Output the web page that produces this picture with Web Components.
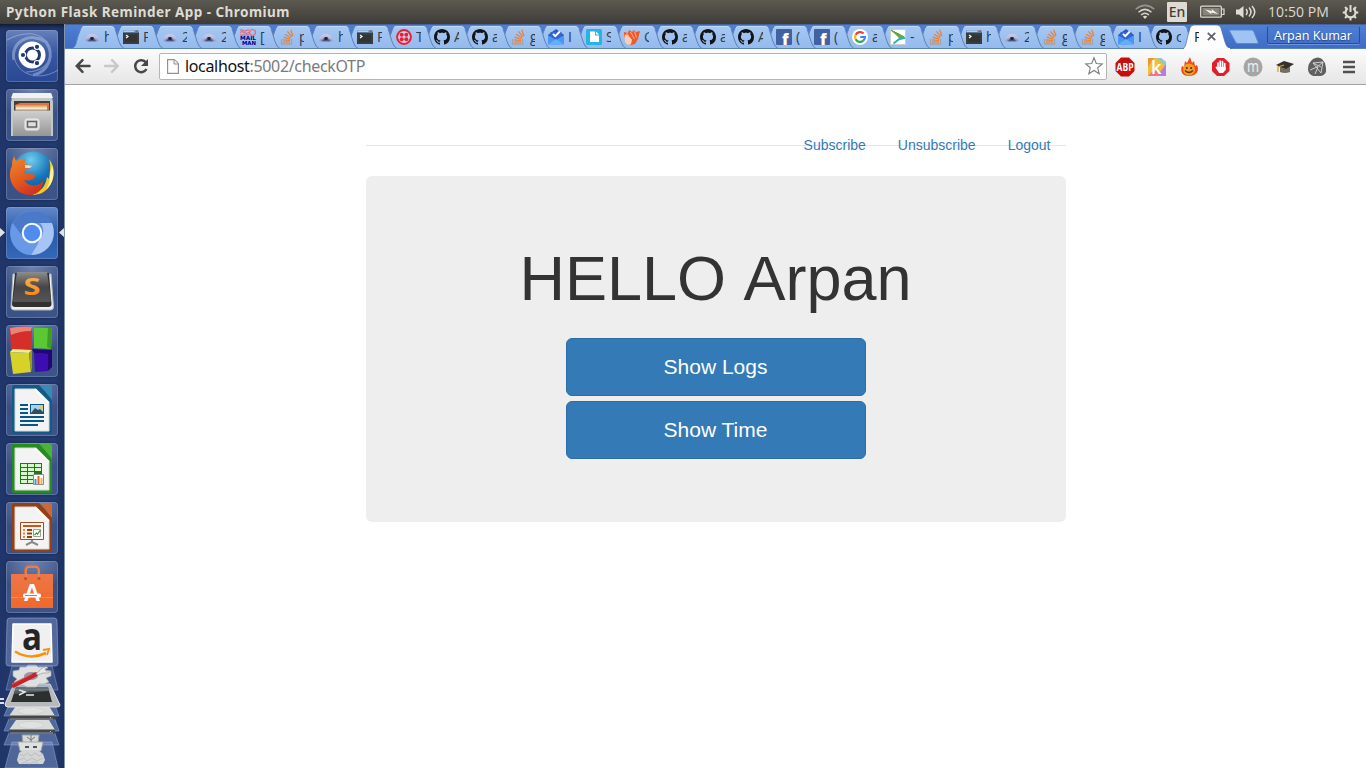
<!DOCTYPE html>
<html lang="en">
<head>
<meta charset="utf-8">
<title>Python Flask Reminder App</title>
<style>
html,body{margin:0;height:100%;overflow:hidden;background:#fff;font-family:"Noto Sans","Open Sans",sans-serif}
</style>
</head>
<body>
<desktop-shell></desktop-shell>
<script>
const T = {
bell:`<defs><radialGradient id="g" cx=".5" cy="1" r=".9"><stop offset=".3" stop-color="#7585b8"/><stop offset=".6" stop-color="#b5bde0"/><stop offset="1" stop-color="#c9cdea"/></radialGradient></defs><path d="M.6 12C.8 7.400 4 4.300 8 4.300S15.200 7.400 15.400 12L13 12.700H3z" fill="url(#g)" stroke="#aab2dc" stroke-width=".6"/><path d="M4 12.300C5 11 6 9.500 6.600 8h2.800c.6 1.500 1.600 3 2.600 4.300z" fill="#4c5578"/><circle cx="8" cy="9.500" r="1.500" fill="#1d2233"/>`,
term:`<path d="M0 1h16v14H0z" fill="#323536"/><path d="M0 1h16v2.600H0z" fill="#7ba6d6"/><path d="M.8 2.200H11" stroke="#d6e7f7" stroke-width=".9"/><path d="M12.500 2.200h2.500" stroke="#d23c30" stroke-width="1.300"/><path d="M3 6l2 1.500-2 1.500" fill="none" stroke="#fff" stroke-width="1.200"/><path d="M1 14V5h14v9z" fill="none" stroke="#4c5051" stroke-width=".6"/>`,
mail:`<path d="M0 1h3l1 1h2l1-1h2M0 3.500q2-2 4 0t5 0M0 6h9" stroke="#ee5960" fill="none" stroke-width="1"/><circle cx="12.500" cy="3.500" r="3" fill="none" stroke="#f0646a" stroke-width="1.200"/><text x="0" y="11.400" font-family="DejaVu Sans" font-weight="700" font-size="5.400" textLength="16" lengthAdjust="spacingAndGlyphs" fill="#00008a">MAIL</text><text x="2" y="16" font-family="DejaVu Sans" font-weight="700" font-size="5.400" textLength="14" lengthAdjust="spacingAndGlyphs" fill="#00008a">MAN</text>`,
so:`<path d="M2.500 10v5h10v-5" fill="none" stroke="#a8a39f" stroke-width="1.300"/><path d="M4 13h7M4.100 10.800l6.900.7M4.700 8.200l6.600 1.900M6 5.200l6 3.500M8.400 2.400l4.500 5.200M11.700.8l2.300 6.200" stroke="#ee7f32" stroke-width="1.200" fill="none"/>`,
twilio:`<circle cx="8" cy="8" r="6.900" fill="#c8d4f4" stroke="#ee1c30" stroke-width="2"/><g fill="#ee1c30"><circle cx="5.700" cy="5.700" r="2"/><circle cx="10.300" cy="5.700" r="2"/><circle cx="5.700" cy="10.300" r="2"/><circle cx="10.300" cy="10.300" r="2"/></g>`,
gh:`<path fill="#121417" d="M8 0C3.580 0 0 3.580 0 8c0 3.540 2.290 6.530 5.470 7.590.4.07.55-.17.55-.38 0-.19-.01-.82-.01-1.490-2.010.37-2.530-.49-2.690-.94-.09-.23-.48-.94-.82-1.130-.28-.15-.68-.52-.01-.53.63-.01 1.080.58 1.230.82.72 1.210 1.870.87 2.330.66.07-.52.28-.87.51-1.070-1.780-.2-3.640-.89-3.640-3.950 0-.87.31-1.590.82-2.150-.08-.2-.36-1.020.08-2.120 0 0 .67-.21 2.200.82.64-.18 1.320-.27 2-.27s1.360.09 2 .27c1.530-1.040 2.200-.82 2.200-.82.44 1.100.16 1.920.08 2.120.51.56.82 1.270.82 2.150 0 3.070-1.870 3.750-3.650 3.950.29.25.54.73.54 1.480 0 1.070-.01 1.930-.01 2.200 0 .21.15.46.55.38A8.010 8.010 0 0 0 16 8c0-4.420-3.580-8-8-8z"/>`,
inbox:`<path d="M0 6l8-6 8 6v9H0z" fill="#2a56c6"/><path d="M2.500 3h11v7h-11z" fill="#3565cf"/><path d="M0 6l8 5 8-5v9.500H0z" fill="#4b95f5"/><path d="M0 15.500L8 10l8 5.500z" fill="#65aefb"/><path d="M5 4.800l2.300 2.400 4.500-4.700" fill="none" stroke="#fff" stroke-width="1.900"/>`,
scribd:`<rect width="16" height="16" rx="1.500" fill="#25b3e8"/><path d="M4 2.500h5v4h4V13H4z" fill="#fff"/><path d="M10 2.500l3 3h-3z" fill="#fff"/>`,
hand:`<path d="M0 3l4 1 1-3 3 2 2-2 2 2 4-1-2 8-3 5-4 1-5-4-2-5z" fill="#f05a28"/><path d="M.5 6L3 5.500 8 11l-1 4-3 1-3-3z" fill="#f9cdb8"/><path d="M2.500 4l5 7M6.500 3l4 7M10.500 2.500l2 6" stroke="#ffc3a8" stroke-width=".8"/>`,
fb:`<rect width="16" height="16" rx="1" fill="#4360a0"/><text x="6" y="16" font-family="Open Sans" font-weight="800" font-size="16" fill="#fff">f</text>`,
google:`<circle cx="8" cy="8" r="8" fill="#fff"/><g fill="none" stroke-width="2.200"><path d="M11.600 4.600A5 5 0 0 0 3.600 5.700" stroke="#ea4335"/><path d="M3.600 5.700a5 5 0 0 0 0 4.600" stroke="#fbbc05"/><path d="M3.600 10.300a5 5 0 0 0 7.700 1.400" stroke="#34a853"/><path d="M11.300 11.700A5 5 0 0 0 13 8H8.200" stroke="#4285f4"/></g>`,
arrow:`<path d="M.5.500h15v15H.5z" fill="#fff" stroke="#c9cfcc"/><path d="M1 1l8 3.500L14.500 9H9z" fill="#69a83c"/><path d="M1 1l6 4 7 3" stroke="#69a83c" stroke-width="1.500"/><path d="M3.500 14.500L9 10.200l6-1.400" fill="none" stroke="#25b4ba" stroke-width="1.900"/>`
};
const tpl = s => { const t=document.createElement('template'); t.innerHTML=s; return t; };
const define = (tag, html, init) => {
  const t = typeof html==='string' ? tpl(html) : null;
  customElements.define(tag, class extends HTMLElement{
    connectedCallback(){
      if(this.shadowRoot) return;
      const r=this.attachShadow({mode:'open'});
      r.append((t||tpl(html(this))).content.cloneNode(true));
      if(init) init(this,r);
    }
  });
};

/* Text that is tracked to fill a set width */
define('fit-text', `<style>:host{display:inline-block;white-space:pre}span{display:inline-block}</style><span><slot></slot></span>`, (el,r)=>{
  const s=r.querySelector('span'), w=+el.getAttribute('w'), n=el.textContent.length;
  s.style.letterSpacing=((w-s.getBoundingClientRect().width)/n)+'px';
});

define('fav-icon', el=>`<style>:host{display:block;width:16px;height:16px}svg{display:block;overflow:visible}</style><svg width="16" height="16" viewBox="0 0 16 16">${T[el.getAttribute('name')]}</svg>`);

define('system-panel', `<style>
:host{display:flex;align-items:center;justify-content:space-between;height:24px;background:linear-gradient(#5c5a50,#3d3c37);color:#dfdbd2;box-sizing:border-box;padding:0 7px 0 6px}
.t{font:700 13.500px/24px "Noto Sans",sans-serif;height:24px}
.r{display:flex;align-items:center;height:24px}svg{display:block}
.en{width:20px;height:20px;background:#dfdbd2;color:#3f3e39;border-radius:1px;font:500 14px/19px "Noto Sans";text-align:center;margin:0 13px 0 12px}
.c{font:14px/22px "Open Sans";margin:0 13px 0 12px}
</style>
<div class="t"><fit-text w="284">Python Flask Reminder App - Chromium</fit-text></div>
<div class="r">
<svg width="20" height="16" viewBox="0 0 20 16" fill="none" stroke-width="1.500"><path d="M.7 5.300Q10-2.500 19.300 5.300" stroke="#97948b"/><path d="M3.500 8.200Q10 2.500 16.500 8.200M6 11Q10 7.500 14 11" stroke="#d6d2c9"/><path d="M7.800 12.500Q10 11 12.200 12.500L10 15z" fill="#dfdbd2"/></svg>
<div class="en">En</div>
<svg width="25" height="14" viewBox="0 0 25 14"><rect x=".7" y="1.200" width="20.600" height="11" rx="1" fill="none" stroke="#dfdbd2" stroke-width="1.300"/><rect x="2.500" y="3" width="17" height="7.500" fill="#88857c"/><path d="M21.500 4H24v5.500h-2.500" fill="none" stroke="#dfdbd2" stroke-width="1.200"/><path d="M5 4.500l7 1.500-.5-2 6.500 5-7-1.500.7 2z" fill="#f4f1e8"/></svg>
<svg style="margin-left:10px" width="21" height="16" viewBox="0 0 21 16"><path d="M1 5.500h3L8.500 2v12L4 10.500H1z" fill="#dfdbd2"/><path d="M11 5q2.500 3 0 6M14 3.500q4 4.500 0 9M17 2q5.500 6 0 12" fill="none" stroke="#dfdbd2" stroke-width="1.500"/></svg>
<div class="c"><fit-text w="61">10:50 PM</fit-text></div>
<svg width="17" height="17" viewBox="0 0 17 17"><g stroke="#dfdbd2" fill="none"><path d="M5.700 4.300a5 5 0 1 0 5.600 0" stroke-width="2.200"/><path d="M8.500 1v7" stroke-width="2"/><path d="M.7 8.500h3M13.300 8.500h3M3 3l2 2M14 3l-2 2M3 14l2-2M14 14l-2-2M8.500 13.500v3" stroke-width="2"/></g></svg>
</div>`);

define('launcher-tile', el=>`<style>
:host{display:block;width:52px;height:52px;border-radius:4px;box-sizing:border-box;overflow:hidden;background:radial-gradient(ellipse 95% 75% at 50% 0,rgba(160,178,215,.62),rgba(110,130,180,.32) 75%,rgba(100,125,175,.38));box-shadow:inset 0 0 0 1px rgba(160,178,215,.34),0 0 3px rgba(5,15,45,.45)}
:host([bg=home]){background:linear-gradient(#6881bb,#3858a0 45%,#294a94)}
:host([bg=web]){background:linear-gradient(#6288ca,#2b5ba8 50%,#3568b9)}
::slotted(svg){display:block;width:52px;height:52px}
</style><slot></slot>`);

const office=(c1,c2,body)=>`<svg viewBox="0 0 52 52"><path d="M8 1h25l13 14v34q0 1-2 1H8q-2 0-2-2V3q0-2 2-2z" fill="${c1}"/><path d="M34 1h10q2 0 2 2v13z" fill="${c2}"/><path d="M9 5h20l14 14v28H9z" fill="#f3f3f3" stroke="#d4d9d8"/><path d="M29 5l14 14" stroke="#fff" stroke-width="2"/>${body}</svg>`;

define('app-launcher', `<style>
:host{display:block;width:65px;height:744px;box-sizing:border-box;padding:6px 0 0 6px;background:linear-gradient(90deg,#20366a,#243b70 85%,#1d315f);border-right:1px solid #8793a8;position:relative;overflow:hidden}
:host::before{content:"";position:absolute;left:0;right:0;top:0;height:5px;background:linear-gradient(#101b36,transparent)}
.tiles{display:grid;gap:7px}
.pip{position:absolute;left:0;top:204px}
.stack{display:block;margin:3px 0 0 -6px;overflow:visible}
</style>
<div class="tiles">
<launcher-tile bg="home"><svg viewBox="0 0 52 52"><g fill="none" stroke="#c3d1f2" opacity=".45"><path d="M8 30C4 12 24 1 40 12 49 24 43 42 27 45" stroke-width="3"/><path d="M1 10C19 0 37 2 43 16 49 34 34 42 20 42" stroke-width="1.200"/><path d="M52 40C35 51 14 46 9 30" stroke-width="1"/></g><circle cx="26" cy="25" r="13.500" fill="#fff"/><circle cx="26.500" cy="25" r="7" fill="none" stroke="#20376f" stroke-width="3"/><g fill="#20376f" stroke="#fff" stroke-width="1.200"><circle cx="17" cy="25" r="2.700"/><circle cx="31" cy="16.800" r="2.700"/><circle cx="31" cy="33.200" r="2.700"/></g></svg></launcher-tile>
<launcher-tile><svg viewBox="0 0 52 52"><defs><linearGradient id="f" x2="0" y2="1"><stop stop-color="#cfd0cf"/><stop offset="1" stop-color="#949594"/></linearGradient></defs><path d="M7 4h38l2 9v34H5V13z" fill="#c5c8c9"/><path d="M7 4h38l2 5H5z" fill="#f1f1f1"/><path d="M8 12h36v10H8z" fill="#403f3d"/><path d="M9 16l5-2h29v7H9z" fill="#d8783e"/><path d="M10 16.500h31v5H10z" fill="#efb47a"/><path d="M10 18.500h31v1.500H10z" fill="#f7e8d2"/><path d="M7 21.500h38V47H7z" fill="url(#f)"/><rect x="19" y="30" width="14" height="11" rx="2" fill="#d9dada" stroke="#eee"/><rect x="21.500" y="32.500" width="9" height="5.500" fill="#dedede" stroke="#626364" stroke-width="1.500"/></svg></launcher-tile>
<launcher-tile><svg viewBox="0 0 52 52"><defs><radialGradient id="b" cx=".45" cy=".2" r=".9"><stop stop-color="#6fcef0"/><stop offset=".5" stop-color="#1875b7"/><stop offset="1" stop-color="#133a75"/></radialGradient><linearGradient id="o" x2=".5" y2="1"><stop stop-color="#f08b27"/><stop offset=".7" stop-color="#e2521e"/><stop offset="1" stop-color="#cf3721"/></linearGradient></defs><circle cx="27" cy="25" r="21.500" fill="url(#b)"/><path d="M43 11c7 8 6 22-1 29-4 5-10 7-16 7 9-3 14-10 15-18l2 2c1-7 2-14 0-20z" fill="#f6c62d"/><path d="M46 17c3 9 1 19-6 25 3-5 4-12 4-16z" fill="#fff3a0"/><path d="M8 8l2 5q4-3 10-2l-2 5q4 0 7 2l-1 2-5 2-1 4q3-2 6 0 6 0 5 3-4 5-11 3 4 7 13 5 4-1 6-4C37 42 31 47 23 47 11 46 3 36 4 25q0-4 2-7 0-6 2-10z" fill="url(#o)"/><path d="M19 17q4 0 7 1l-2 2-5 0z" fill="#f9d4c1"/></svg></launcher-tile>
<launcher-tile bg="web"><svg viewBox="0 0 52 52"><circle cx="26" cy="26" r="22" fill="#5e91df"/><path d="M6.500 16C14 2 38-1 46 16H26L16.500 29z" fill="#4a79c9"/><path d="M46 16c6 16-4 32-21 32l12-21q1-7-3-11z" fill="#a6c5f6"/><path d="M6.500 16C0 31 10 48 25 48l7-11-16-8z" fill="#6898e6"/><circle cx="26" cy="26" r="10.300" fill="#f5f8fd"/><circle cx="26" cy="26" r="8.200" fill="#508cf0"/></svg></launcher-tile>
<launcher-tile><svg viewBox="0 0 52 52"><defs><linearGradient id="s" x2="0" y2="1"><stop stop-color="#8c8d8c"/><stop offset=".5" stop-color="#454645"/><stop offset="1" stop-color="#555"/></linearGradient><linearGradient id="y" x2="0" y2="1"><stop stop-color="#ffc35d"/><stop offset="1" stop-color="#ee7910"/></linearGradient></defs><path d="M7 8h38l2.500 33q0 3-3 3H8q-3 0-3-3z" fill="#eef0f0" stroke="#b0b5b8"/><path d="M9 7h34l2.500 31q0 3-3 3H9q-3 0-3-3z" fill="#303130"/><path d="M11 6h30l4 28q0 2-3 2H10q-3 0-3-2z" fill="url(#s)"/><text x="26" y="29" text-anchor="middle" font-family="Open Sans" font-weight="700" font-size="24" textLength="17" lengthAdjust="spacingAndGlyphs" fill="url(#y)">S</text></svg></launcher-tile>
<launcher-tile><svg viewBox="0 0 52 52"><path d="M4 3q10-2 22-1v22q-11 0-21 2z" fill="#d52e2b"/><path d="M4 3q10-2 22-1l-1 4Q14 6 5 10z" fill="#ed8278"/><path d="M28 3h18l-1 21-17-1z" fill="#59c832"/><path d="M42 3h4l-1 21-4-2z" fill="#3c9e23"/><path d="M4 27l19 1 2 19-18 2z" fill="#d5d329"/><path d="M4 27l19 1 3-3-19-1z" fill="#eeef87"/><path d="M23 28l3-3v18l-1 4z" fill="#9b991a"/><path d="M28 28l14 1v17l-13 1z" fill="#3c0eaf"/><path d="M42 29l4-4v17l-4 4zM28 28l-2-4 20 1-4 4z" fill="#240577"/></svg></launcher-tile>
<launcher-tile>${office('#125b86','#378ab8','<g stroke="#075789" stroke-width="2"><path d="M14 21h8M14 25h8M14 29h8M14 33h24M14 37h24M14 41h18"/></g><rect x="24.500" y="20.500" width="13" height="9" fill="#a7d4ed" stroke="#075789"/><path d="M25 29l4-5 3 2 2-1 4 4z" fill="#344c5b"/><circle cx="35" cy="23" r="1.700" fill="#f6c646"/>')}</launcher-tile>
<launcher-tile>${office('#258d1d','#4ab239','<path d="M14 20h22v21H14z" fill="#187c11"/><path d="M15 21h6v3h-6zM22 21h6v3h-6zM29 21h6v3h-6zM15 25h6v3h-6zM22 25h6v3h-6zM29 25h6v3h-6zM15 29h6v3h-6zM22 29h6v3h-6zM15 33h6v3h-6zM22 33h6v3h-6zM15 37h6v3h-6zM22 37h6v3h-6z" fill="#d6f7cd"/><path d="M27.500 31.500h10v10h-10z" fill="#fff" stroke="#8b8e8d"/><path d="M28.500 36h2v5h-2z" fill="#4593ca"/><path d="M31.500 33h2v8h-2z" fill="#e56727"/><path d="M34.500 35h2v6h-2z" fill="#eeb547"/>')}</launcher-tile>
<launcher-tile>${office('#983e13','#c86a3a','<path d="M26 37v3l-6 3M26 40l6 3" stroke="#858b8b" stroke-width="2" fill="none"/><path d="M14.500 20.500h23v17h-23z" fill="#fff7f0" stroke="#ad481b"/><path d="M17 24h18" stroke="#c9551e" stroke-width="2"/><path d="M17 28h2M17 31.500h2M17 35h2" stroke="#ec8145" stroke-width="2"/><path d="M21 28h5M21 31.500h5M21 35h5" stroke="#983e13" stroke-width="2"/><path d="M27.500 27.500h7v7h-7z" fill="#fff" stroke="#9f9f9d"/><path d="M28.500 33l2-2 1 1 3-4" fill="none" stroke="#289b30" stroke-width="1.200"/>')}</launcher-tile>
<launcher-tile><svg viewBox="0 0 52 52"><defs><linearGradient id="p" x2="0" y2="1"><stop stop-color="#ed7648"/><stop offset="1" stop-color="#f16829"/></linearGradient></defs><path d="M19.500 18V9q0-4 4-4h5q4 0 4 4v9" fill="none" stroke="#d76b3c" stroke-width="2.500"/><path d="M5 13h42v34H5z" fill="url(#p)"/><path d="M20 17V10q0-4 4-4h5q4 0 4 4v7" fill="none" stroke="#e08a62" stroke-width="1.500"/><path d="M5 36h42v1H5z" fill="#f28a56"/><circle cx="19.500" cy="17.500" r="1.500" fill="#b95122"/><circle cx="33" cy="17.500" r="1.500" fill="#b95122"/><text x="26" y="40" font-family="Liberation Sans" font-weight="700" font-size="24" text-anchor="middle" textLength="17" lengthAdjust="spacingAndGlyphs" fill="#fff">A</text><rect x="17" y="32.500" width="18" height="4" rx="1.500" fill="#fff"/><path d="M19 34.500h12" stroke="#ef6d32" stroke-width="1"/></svg></launcher-tile>
</div>
<svg class="stack" width="64" height="152" viewBox="0 616 64 152">
<g fill="#8fa7d8" fill-opacity=".42" stroke="#a4b8df" stroke-opacity=".45"><path d="M12 742h40l6 26H5z"/><path d="M11 728h42l6 17H4z"/><path d="M11 714h42l6 17H4z"/><path d="M11 700h42l6 16H4z"/></g>
<path d="M22 735h17l-1 8H23z" fill="#d6d8d7" stroke="#9da2a6"/><path d="M31 735v7m-4-5 4 3 4-3" stroke="#777b7c" fill="none"/><path d="M18 742h25l-2 9H20z" fill="#dfe1e0" stroke="#9da2a6" stroke-width=".8"/><path d="M25 747h4M33 747h4" stroke="#4e5356" stroke-width="1.800"/><path d="M19 753l4-3h15l5 4 2 6-2 4H19l-2-4z" fill="#d2d5d4"/><path d="M20 754l4 2 3-3 4 3 4-3 4 3 3-2M19 760l5-2 3 3 5-3 5 3 6-3M21 764l4-2 4 2 5-2 5 2" stroke="#b3b9bb" stroke-width=".8" fill="none"/>
<g id="d"><path d="M16 720h33l6 10H9z" fill="#d9dbda"/><ellipse cx="31" cy="725" rx="13" ry="3.500" fill="#e0e2e1" stroke="#c6caca" stroke-width=".6"/><path d="M9 729.500h46v4H9z" fill="#42474a"/><path d="M10 733h43" stroke="#8e9294"/><path d="M50 731.500h1" stroke="#7fdf87"/></g><use href="#d" y="-14"/>
<path d="M14 684h36l10 21q0 2-3 2H8q-3 0-3-3z" fill="#b7babb" stroke="#e2e3e3"/><path d="M16 687h32l4 15H11z" fill="#2b302f"/><path d="M16 687h32l1 4-35 3z" fill="#555a59"/><path d="M19 690l6 2-6 3M26 695h8" fill="none" stroke="#e6e9e7" stroke-width="1.500"/><path d="M0 699h4M0 703h4" stroke="#dce0e8" stroke-width="2"/>
<path d="M12 666h40l6 24H6z" fill="#8fa7d8" fill-opacity=".25" stroke="#a4b8df" stroke-opacity=".4"/><path d="M13 671l6-1 1-3h6l2-2h8l2 2h6l1 3 6 1v5l-5 2 3 4-5 2-5 0-3 3h-9l-4-2-5 1-4-4 3-3-4-3z" fill="#dfe1df" stroke="#a8aeb0" stroke-width=".7"/><ellipse cx="31" cy="676" rx="7" ry="4" fill="#929cae"/><path d="M13.500 685.500l22-11" stroke="#c4252b" stroke-width="4.500" stroke-linecap="round"/><path d="M12 684l20-10" stroke="#e3646a" stroke-width="1"/><path d="M36 674l5-5q5-4 7-1l-3 1 1 2h5q-2 3-8 2l-5 2z" fill="#e8eae9" stroke="#969b9b" stroke-width=".7"/>
<path d="M10 618h44q3 0 3 3l1 42q0 3-3 3H9q-3 0-3-3l1-42q0-3 3-3z" fill="#8296c5" fill-opacity=".5" stroke="#a4b8df" stroke-opacity=".5"/><path d="M13 624h38l1 38H12z" fill="#f0f0f0" stroke="#fff" stroke-linejoin="round" stroke-width="1.500"/><text x="32" y="650" text-anchor="middle" font-family="Open Sans" font-weight="700" font-size="37" textLength="20" lengthAdjust="spacingAndGlyphs" fill="#252525">a</text><path d="M15 651.500q15 9 31 1.500" fill="none" stroke="#f5930f" stroke-width="2.500"/><path d="M43 650l6-1-2 6" fill="none" stroke="#f5930f" stroke-width="1.800"/>
</svg>
<svg class="pip" width="64" height="9" viewBox="0 0 64 9"><path d="M0 0l5 4.500L0 9zM64 0l-5 4.500L64 9z" fill="#dfe2e8"/></svg>`);

define('browser-tab', el=>`<style>
:host{display:grid;grid-template:25px/12px 16px 4px 6px 1fr;align-items:center;width:52px;height:25px;margin-right:-14px;position:relative;flex:none}
:host([wide]){width:53px}
.shape{grid-area:1/1/2/6}.shape svg{display:block}
fav-icon{grid-area:1/2}
.l{grid-area:1/4;width:5px;overflow:hidden;color:#2c3a52;font:14px/20px "Open Sans"}
.active{grid-area:1/2/2/5;display:flex;gap:8px;align-items:center}
.active .l{color:#202020}
</style><div class="shape">${el.hasAttribute('active')?
`<svg width="52" height="25" viewBox="0 0 52 25"><path d="M0 25C4 24 4 19 6 11L8 4Q9 1 12 1h23q3 0 4 3l4 14q2 7 7 7z" fill="#fdfdfe" stroke="#426aaf" stroke-width=".7"/><path d="M2 25h46" stroke="#fbfcfd" stroke-width="2"/></svg>`:
`<svg width="53" height="25" viewBox="0 0 53 25"><defs><linearGradient id="t" x2="0" y2="1"><stop stop-color="#a6c8f4"/><stop offset="1" stop-color="#94baec"/></linearGradient></defs><path d="M0 24.500C4 23 4 19 6 12L9 4Q10 1.500 13 1.500h26q3 0 4 3l4 13q2 6 5 7z" fill="url(#t)" stroke="#5d82b7" stroke-width="1"/><path d="M10 3.500q1-1 3-1h26q2 0 3 2" fill="none" stroke="#bdd8f9"/></svg>`}</div>
${el.hasAttribute('active')?`<div class="active"><span class="l">P</span><svg width="9" height="9" viewBox="0 0 9 9"><path d="M.8.800l7.400 7.400M8.200.800L.8 8.200" stroke="#5b5f66" stroke-width="1.700"/></svg></div>`:`<fav-icon name="${el.getAttribute('icon')}"></fav-icon><span class="l">${el.getAttribute('label')}</span>`}`);

const tabs='bell h,term P,bell 2,bell 2,mail [,so p,bell h,term P,twilio T,gh A,gh a,so g,inbox I,scribd S,hand G,gh a,gh a,gh A,fb (,fb (,google a,arrow -,so p,term h,bell 2,so g,so g,inbox I,gh c'.split(',').map((t,i)=>{const [a,b]=t.split(' ');return `<browser-tab ${i<8?'wide':''} icon="${a}" label="${b}" style="z-index:${40-i}"></browser-tab>`}).join('');
define('tab-strip', `<style>
:host{display:flex;height:25px;background:linear-gradient(#4f7fd6,#3f6cc4);padding-left:7px;box-sizing:border-box;position:relative;isolation:isolate;box-shadow:inset 0 1px #44639c,inset 0 -1px #5d82b7}
.new{margin:5px 0 0 8px;position:relative;z-index:50}
.user{height:18px;width:93px;box-sizing:border-box;margin:2px 0 0 7px;border:1px solid #294c92;border-top-color:#4a75c8;border-radius:2px;box-shadow:0 1px #6c93dd;color:#fff;font:12.500px/17px "Noto Sans";padding-left:6px;text-shadow:0 1px 1px #22427f;white-space:nowrap}
svg{display:block}
</style>${tabs}<browser-tab active style="z-index:60"></browser-tab>
<svg class="new" width="32" height="16" viewBox="0 0 32 16"><path d="M1.500 1h22q2 0 2.500 2l4 10q1 1.500-1 1.500H10q-2 0-2.500-1.500L2 3Q1 1 2 1z" fill="#9fc3f2" stroke="#5f87c8"/></svg>
<div class="user"><fit-text w="78">Arpan Kumar</fit-text></div>`);

define('browser-toolbar', `<style>
:host{display:flex;align-items:center;height:36px;box-sizing:border-box;background:linear-gradient(#fbfbfb,#e6e6e6);border-bottom:1px solid #a3a3a3;padding:0 9px 0 10px}
svg{display:block;flex:none;overflow:visible}
.nav{display:flex;gap:13px;width:84px;align-items:center;margin-top:-1px}
.url{display:flex;align-items:center;width:948px;height:27px;box-sizing:border-box;border:1px solid #b5b5b5;border-radius:2px;background:#fff;padding:0 3px 0 7px;font:16px/25px "Noto Sans";color:#7a7a7a;margin-top:-1px}
.url fit-text{margin-left:6px}.url b{font-weight:400;color:#111}
.ext{display:flex;gap:12px;margin:0 0 0 8px;align-items:center}
.ext svg:last-child{margin-left:3px}
</style>
<div class="nav">
<svg width="16" height="16" viewBox="0 0 16 16"><path d="M14.500 8H2M7.500 2.200L1.800 8l5.700 5.800" fill="none" stroke="#484848" stroke-width="2.500" stroke-linecap="round"/></svg>
<svg width="16" height="16" viewBox="0 0 16 16"><path d="M1 8h12.500M8 2.200L13.700 8 8 13.800" fill="none" stroke="#c8c8c8" stroke-width="2.400" stroke-linecap="round"/></svg>
<svg width="17" height="17" viewBox="0 0 17 17"><path d="M13 4.500A6 6 0 1 0 13.500 11" fill="none" stroke="#484848" stroke-width="2.500"/><path d="M15 1v7H8z" fill="#484848"/></svg>
</div>
<div class="url"><svg width="12" height="15" viewBox="0 0 12 15"><path d="M.6.600h6.800l4 4v9.800H.6z" fill="#fff" stroke="#929292" stroke-width="1.200"/><path d="M7 .6V5h4.400" fill="#eee" stroke="#929292"/></svg><fit-text w="180"><b>localhost</b>:5002/checkOTP</fit-text>
<svg style="margin-left:auto" width="18" height="18" viewBox="0 0 18 18"><path d="M9 .8l2.300 5.700 6 .4-4.600 3.900 1.500 6L9 13.500l-5.200 3.300 1.500-6L.7 6.900l6-.4z" fill="#fff" stroke="#7e7e7e" stroke-width="1.100"/></svg></div>
<div class="ext">
<svg width="20" height="20" viewBox="0 0 20 20"><path d="M6 .5h8L19.500 6v8L14 19.500H6L.5 14V6z" fill="#c70d0d"/><text x="1.500" y="13.700" font-family="Open Sans" font-size="10.500" font-weight="700" textLength="17" lengthAdjust="spacingAndGlyphs" fill="#fff">ABP</text></svg>
<svg width="20" height="20" viewBox="0 0 20 20"><path d="M1 1h13l5 4v14H1z" fill="#f2be38"/><path d="M1 1h6L1 10z" fill="#f3952e"/><path d="M9 1h5l5 4v4z" fill="#89c9d8"/><path d="M19 7v12h-9z" fill="#b47be0"/><path d="M1 19l8-8 4 8z" fill="#ee7390"/><text x="4" y="17" font-family="Open Sans" font-size="18" font-weight="600" fill="#fff">k</text></svg>
<svg width="20" height="20" viewBox="0 0 20 20"><path d="M10 19C3 19 1 14 3 9l2 1 1-6 2 2 3-6 2 6 2-2 1 5 2-1c3 6-1 11-8 11z" fill="#ea4b18"/><circle cx="10" cy="12.500" r="6" fill="#f59d22"/><circle cx="7.800" cy="11" r="1" fill="#442a17"/><circle cx="12.200" cy="11" r="1" fill="#442a17"/><path d="M6 13.500q4 4 8 0" fill="none" stroke="#672c12" stroke-width="1.200"/></svg>
<svg width="20" height="20" viewBox="0 0 20 20"><path d="M6 1h7l5.500 5v8L13 19H6l-5-5V6z" fill="#e21e2a"/><path d="M7 6v5M9.200 4v7M11.500 4.500V11M13.700 6.500v6M5.500 10.500l3 4.500" stroke="#fff" stroke-width="1.700" stroke-linecap="round"/><path d="M6.500 10h8v3l-2.500 3H8.500z" fill="#fff"/></svg>
<svg width="20" height="20" viewBox="0 0 20 20"><circle cx="10" cy="10" r="9.500" fill="#a5a5a5"/><text x="10" y="14.500" text-anchor="middle" font-family="Noto Sans" font-size="16" textLength="12" lengthAdjust="spacingAndGlyphs" fill="#eee">m</text></svg>
<svg width="20" height="20" viewBox="0 0 20 20"><path d="M5 9h10v6q-5 2-10 0z" fill="#766e60"/><path d="M1 8l8-4 10 3-8 5z" fill="#34302a"/><path d="M9 8l-6 2v5" fill="none" stroke="#d39b31" stroke-width="1.200"/></svg>
<svg width="20" height="20" viewBox="0 0 20 20"><path d="M6 2Q11-1 15 2l3 4 1 5v4q-2 4-6 4H6q-5-2-5-7 0-6 5-10z" fill="#606060"/><path d="M6 6l10-1-2 11-4-5zM6 6l8 4M3 13l7-3 6-5M11 10l-3 7" fill="none" stroke="#d9d9d9" stroke-width=".9"/></svg>
<svg width="14" height="14" viewBox="0 0 14 14"><path d="M1 2h12M1 7h12M1 12h12" stroke="#505050" stroke-width="2.400"/></svg>
</div>`);

define('nav-link', `<style>:host{display:block;padding:0 15px;margin-left:2px}a{color:#337ab7;text-decoration:none;font:14px/20px "Liberation Sans",sans-serif;display:block}</style><a><slot></slot></a>`);
define('action-button', `<style>:host{display:block;width:300px}button{display:block;width:100%;height:58px;background:#337ab7;border:1px solid #2e6da4;border-radius:6px;color:#fff;font:21px/28px "Liberation Sans",sans-serif;padding:0 1px 0 0}</style><button><slot></slot></button>`);
define('jumbo-panel', `<style>:host{display:flex;flex-direction:column;align-items:center;gap:5px;height:346px;box-sizing:border-box;padding-top:68px;background:#eee;border-radius:6px}::slotted(h1){margin:0 1px 20px 0!important;font:500 63px/69px "Liberation Sans",sans-serif!important;font-kerning:none!important;color:#333}</style><slot></slot>`);
define('reminder-page', `<style>
:host{display:block;width:700px;margin:0 auto;padding:50px 0 0;box-sizing:border-box;position:relative;left:.5px}
nav{display:flex;justify-content:flex-end;height:20px;margin-bottom:21px;padding-right:.5px;background:linear-gradient(#e5e5e5,#e5e5e5) 0 10px/100% 1px no-repeat}
</style><nav><nav-link>Subscribe</nav-link><nav-link>Unsubscribe</nav-link><nav-link>Logout</nav-link></nav>
<jumbo-panel><h1>HELLO Arpan</h1><action-button>Show Logs</action-button><action-button>Show Time</action-button></jumbo-panel>`);
define('desktop-shell', `<style>
:host{display:grid;grid-template:24px 744px/65px 1fr;width:1366px;height:768px;overflow:hidden}
system-panel{grid-column:1/3}.win{min-width:0}
</style><system-panel></system-panel><app-launcher></app-launcher><div class="win"><tab-strip></tab-strip><browser-toolbar></browser-toolbar><reminder-page></reminder-page></div>`);
</script>
</body>
</html>
